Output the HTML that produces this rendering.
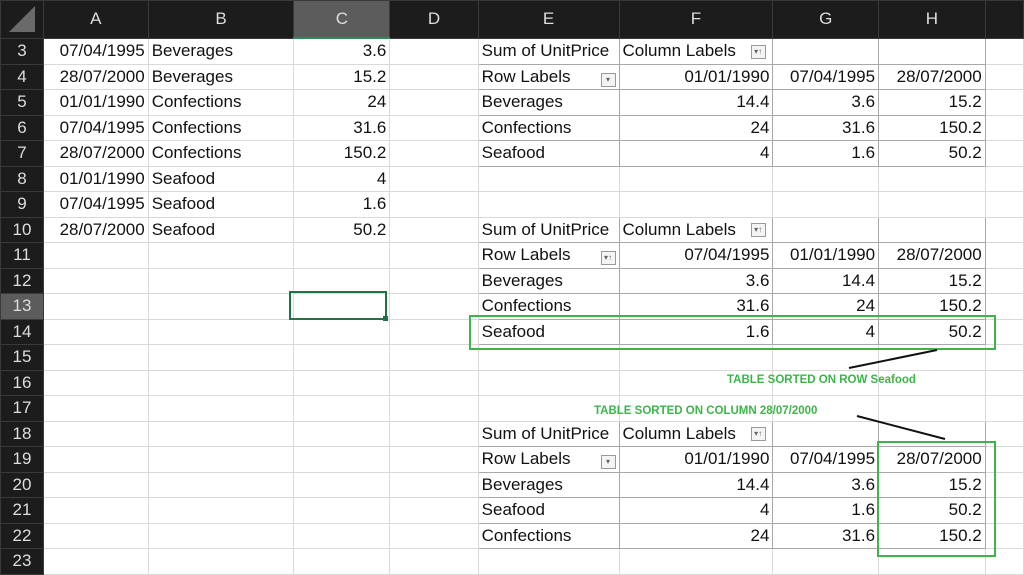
<!DOCTYPE html><html><head><style>
body{margin:0;width:1024px;height:574px;overflow:hidden;background:#fff;font-family:"Liberation Sans",sans-serif;position:relative}
table{border-collapse:collapse;table-layout:fixed;position:absolute;left:0;top:0}
td{height:24.5px;padding:0 3px;font-size:17px;color:#111;border:1px solid #d9d9d9;white-space:nowrap;overflow:hidden}
tr.h td{height:36px;background:#1c1c1c;color:#ddd;text-align:center;border:1px solid #3a3a3a;font-size:17px}
td.n{background:#1c1c1c;color:#ddd;text-align:center;border:1px solid #3a3a3a;padding:0}
.r{text-align:right}
.p{border-color:#a8a8a8}
.f{display:inline-block;width:13px;height:12px;border:1px solid #999;background:#f4f4f4;font-size:8px;line-height:12px;text-align:center;color:#666;vertical-align:middle;float:right;margin-top:6px}
.g{position:absolute;border:2px solid #3db54a}
.t{position:absolute;color:#3db54a;font-weight:bold;font-size:11.5px}
</style></head><body>
<table>
<colgroup><col style="width:38px"><col style="width:105px"><col style="width:147px"><col style="width:97px"><col style="width:90px"><col style="width:141px"><col style="width:154px"><col style="width:106px"><col style="width:107px"><col style="width:39px"></colgroup>
<tr class="h"><td style="background:#1c1c1c"><svg width="30" height="30" style="display:block;margin:3px"><polygon points="28,2 28,28 2,28" fill="#6a6a6a"/></svg></td><td>A</td><td>B</td><td style="background:#5c5c5c;border-bottom:2px solid #2e8b57">C</td><td>D</td><td>E</td><td>F</td><td>G</td><td>H</td><td></td></tr>
<tr><td class="n">3</td><td class="r">07/04/1995</td><td>Beverages</td><td class="r">3.6</td><td></td><td class="p">Sum of UnitPrice</td><td class="p">Column Labels <span class="f" style="float:none;margin:0 0 0 10px">▾↑</span></td><td class="p"></td><td class="p"></td><td></td></tr>
<tr><td class="n">4</td><td class="r">28/07/2000</td><td>Beverages</td><td class="r">15.2</td><td></td><td class="p">Row Labels<span class="f">▾</span></td><td class="p r">01/01/1990</td><td class="p r">07/04/1995</td><td class="p r">28/07/2000</td><td></td></tr>
<tr><td class="n">5</td><td class="r">01/01/1990</td><td>Confections</td><td class="r">24</td><td></td><td class="p">Beverages</td><td class="p r">14.4</td><td class="p r">3.6</td><td class="p r">15.2</td><td></td></tr>
<tr><td class="n">6</td><td class="r">07/04/1995</td><td>Confections</td><td class="r">31.6</td><td></td><td class="p">Confections</td><td class="p r">24</td><td class="p r">31.6</td><td class="p r">150.2</td><td></td></tr>
<tr><td class="n">7</td><td class="r">28/07/2000</td><td>Confections</td><td class="r">150.2</td><td></td><td class="p">Seafood</td><td class="p r">4</td><td class="p r">1.6</td><td class="p r">50.2</td><td></td></tr>
<tr><td class="n">8</td><td class="r">01/01/1990</td><td>Seafood</td><td class="r">4</td><td></td><td></td><td></td><td></td><td></td><td></td></tr>
<tr><td class="n">9</td><td class="r">07/04/1995</td><td>Seafood</td><td class="r">1.6</td><td></td><td></td><td></td><td></td><td></td><td></td></tr>
<tr><td class="n">10</td><td class="r">28/07/2000</td><td>Seafood</td><td class="r">50.2</td><td></td><td class="p">Sum of UnitPrice</td><td class="p">Column Labels <span class="f" style="float:none;margin:0 0 0 10px">▾↑</span></td><td class="p"></td><td class="p"></td><td></td></tr>
<tr><td class="n">11</td><td></td><td></td><td></td><td></td><td class="p">Row Labels<span class="f">▾↑</span></td><td class="p r">07/04/1995</td><td class="p r">01/01/1990</td><td class="p r">28/07/2000</td><td></td></tr>
<tr><td class="n">12</td><td></td><td></td><td></td><td></td><td class="p">Beverages</td><td class="p r">3.6</td><td class="p r">14.4</td><td class="p r">15.2</td><td></td></tr>
<tr><td class="n" style="background:#5c5c5c">13</td><td></td><td></td><td></td><td></td><td class="p">Confections</td><td class="p r">31.6</td><td class="p r">24</td><td class="p r">150.2</td><td></td></tr>
<tr><td class="n">14</td><td></td><td></td><td></td><td></td><td class="p">Seafood</td><td class="p r">1.6</td><td class="p r">4</td><td class="p r">50.2</td><td></td></tr>
<tr><td class="n">15</td><td></td><td></td><td></td><td></td><td></td><td></td><td></td><td></td><td></td></tr>
<tr><td class="n">16</td><td></td><td></td><td></td><td></td><td></td><td></td><td></td><td></td><td></td></tr>
<tr><td class="n">17</td><td></td><td></td><td></td><td></td><td></td><td></td><td></td><td></td><td></td></tr>
<tr><td class="n">18</td><td></td><td></td><td></td><td></td><td class="p">Sum of UnitPrice</td><td class="p">Column Labels <span class="f" style="float:none;margin:0 0 0 10px">▾↑</span></td><td class="p"></td><td class="p"></td><td></td></tr>
<tr><td class="n">19</td><td></td><td></td><td></td><td></td><td class="p">Row Labels<span class="f">▾</span></td><td class="p r">01/01/1990</td><td class="p r">07/04/1995</td><td class="p r">28/07/2000</td><td></td></tr>
<tr><td class="n">20</td><td></td><td></td><td></td><td></td><td class="p">Beverages</td><td class="p r">14.4</td><td class="p r">3.6</td><td class="p r">15.2</td><td></td></tr>
<tr><td class="n">21</td><td></td><td></td><td></td><td></td><td class="p">Seafood</td><td class="p r">4</td><td class="p r">1.6</td><td class="p r">50.2</td><td></td></tr>
<tr><td class="n">22</td><td></td><td></td><td></td><td></td><td class="p">Confections</td><td class="p r">24</td><td class="p r">31.6</td><td class="p r">150.2</td><td></td></tr>
<tr><td class="n">23</td><td></td><td></td><td></td><td></td><td></td><td></td><td></td><td></td><td></td></tr>
</table>
<div style="position:absolute;left:289px;top:291px;width:94px;height:25px;border:2px solid #217346"></div>
<div style="position:absolute;left:383px;top:316px;width:5px;height:5px;background:#217346"></div>
<div class="g" style="left:469px;top:315px;width:523px;height:31px"></div>
<div class="g" style="left:877px;top:441px;width:115px;height:112px"></div>
<svg style="position:absolute;left:0;top:0" width="1024" height="574"><line x1="849" y1="368" x2="937" y2="350" stroke="#111" stroke-width="2"/><line x1="857" y1="416" x2="945" y2="439" stroke="#111" stroke-width="2"/></svg>
<div class="t" style="left:727px;top:374px">TABLE SORTED ON ROW Seafood</div>
<div class="t" style="left:594px;top:405px">TABLE SORTED ON COLUMN 28/07/2000</div>
</body></html>
